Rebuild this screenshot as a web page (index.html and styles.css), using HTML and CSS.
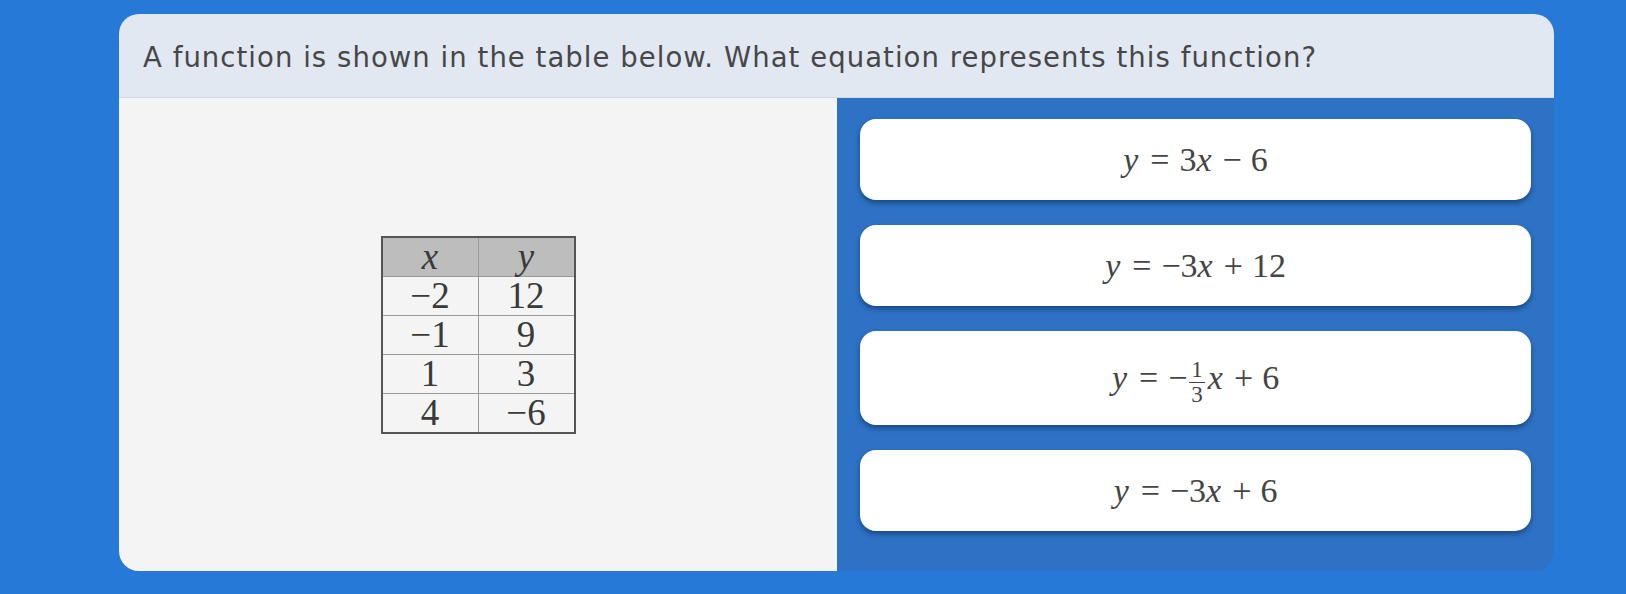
FILE: index.html
```html
<!DOCTYPE html>
<html>
<head>
<meta charset="utf-8">
<link rel="stylesheet" href="styles.css">
</head>
<body>
<div class="page">
  <div class="card">
    <div class="question">A function is shown in the table below. What equation represents this function?</div>
    <div class="content">
      <div class="stimulus">
        <table class="ftable">
          <thead>
            <tr><th><i>x</i></th><th><i>y</i></th></tr>
          </thead>
          <tbody>
            <tr><td>−2</td><td>12</td></tr>
            <tr><td>−1</td><td>9</td></tr>
            <tr><td>1</td><td>3</td></tr>
            <tr><td>4</td><td>−6</td></tr>
          </tbody>
        </table>
      </div>
      <div class="choices">
        <div class="choice">
          <span class="math"><i>y</i><span class="rel">=</span>3<i>x</i><span class="bin">−</span>6</span>
        </div>
        <div class="choice">
          <span class="math"><i>y</i><span class="rel">=</span>−3<i>x</i><span class="bin">+</span>12</span>
        </div>
        <div class="choice tall">
          <span class="math"><i>y</i><span class="rel">=</span>−<span class="frac"><span class="num">1</span><span class="den">3</span></span><i>x</i><span class="bin">+</span>6</span>
        </div>
        <div class="choice">
          <span class="math"><i>y</i><span class="rel">=</span>−3<i>x</i><span class="bin">+</span>6</span>
        </div>
      </div>
    </div>
  </div>
</div>
</body>
</html>
```

FILE: styles.css
```css
html, body {
  margin: 0;
  padding: 0;
}
body {
  background: #2779d8;
  width: 1626px;
  height: 594px;
  overflow: hidden;
}
.page {
  padding: 14px 0 0 119px;
}
.card {
  width: 1435px;
  height: 557px;
  border-radius: 20px;
  overflow: hidden;
  display: flex;
  flex-direction: column;
}
.question {
  flex: none;
  background: #e1e8f2;
  border-bottom: 1px solid #d3d9e0;
  display: flex;
  align-items: center;
  padding-left: 24px;
  padding-top: 3px;
  box-sizing: border-box;
  height: 84px;
  font-family: "DejaVu Sans", sans-serif;
  font-size: 27.5px;
  color: #474747;
  letter-spacing: 1.05px;
}
.content {
  flex: 1;
  display: grid;
  grid-template-columns: 718px 1fr;
}
.stimulus {
  background: #f4f4f4;
  display: flex;
  align-items: center;
  justify-content: center;
}
.ftable {
  border-collapse: collapse;
  border: 2px solid #555;
  font-family: "Liberation Serif", "Times New Roman", serif;
  font-size: 37px;
  color: #3a3a3a;
}
.ftable th, .ftable td {
  width: 95px;
  height: 38px;
  padding: 0;
  text-align: center;
  border: 1px solid #9a9a9a;
  line-height: 36px;
  font-weight: normal;
}
.ftable th {
  background: #bdbdbd;
}
.choices {
  background: #2d72c4;
  padding: 21px 23px 0 23px;
  display: flex;
  flex-direction: column;
  gap: 25px;
}
.choice {
  background: #ffffff;
  border-radius: 16px;
  height: 81px;
  display: flex;
  align-items: center;
  justify-content: center;
  box-shadow: 0 3px 5px rgba(10, 30, 70, 0.5);
}
.choice.tall {
  height: 94px;
}
.math {
  font-family: "Liberation Serif", "Times New Roman", serif;
  font-size: 34px;
  color: #444;
  display: inline-flex;
  align-items: center;
  white-space: nowrap;
}
.math i {
  padding-right: 2px;
}
.rel {
  margin: 0 10px;
}
.bin {
  margin: 0 9px;
}
.frac {
  display: inline-flex;
  flex-direction: column;
  align-items: center;
  font-size: 23px;
  line-height: 22px;
  margin: 0 3px 0 2px;
  padding-top: 9px;
}
.num {
  border-bottom: 1.5px solid #444;
  padding: 0 2px 1px;
}
.den {
  padding: 1px 2px 0;
}
```
